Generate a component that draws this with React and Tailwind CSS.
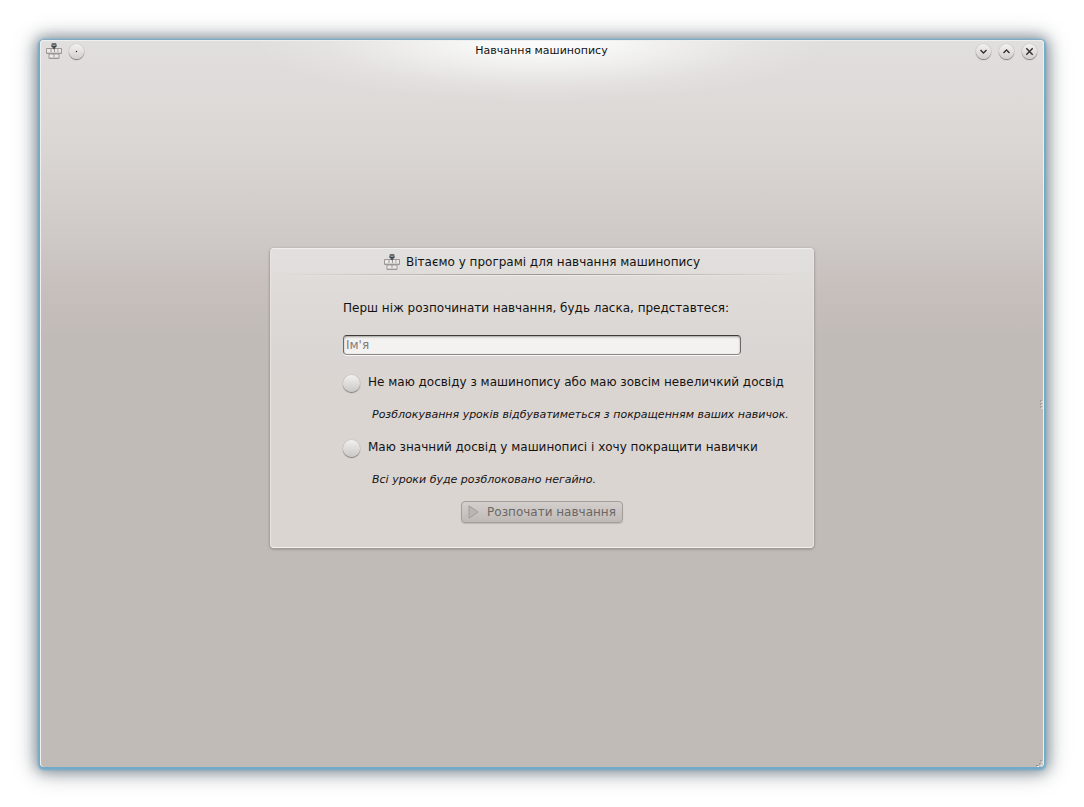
import { useState } from "react";

function TypistIcon() {
  return (
    <svg width="16" height="16" viewBox="0 0 16 16" aria-hidden="true" className="shrink-0">
      <g fill="#9b9795">
        <rect x="0" y="5" width="16" height="6" rx="1" />
        <rect x="2.5" y="10" width="11" height="6" rx="1" />
      </g>
      <g fill="#eceae8">
        <rect x="1" y="6" width="3.5" height="3.5" />
        <rect x="5.500" y="6" width="2.500" height="3.500" />
        <rect x="9" y="6" width="2.500" height="3.500" />
        <rect x="12.300" y="6" width="2.700" height="3.500" />
        <rect x="3.500" y="11.500" width="4" height="3" />
        <rect x="8.500" y="11.500" width="4" height="3" />
      </g>
      <g fill="#cfccc9">
        <rect x="1" y="9" width="14" height="1" />
        <rect x="3.500" y="14" width="9" height="1" />
      </g>
      <rect x="5.500" y="0" width="5" height="3" rx="1" fill="#6c6e6f" />
      <rect x="5.500" y="2" width="5" height="2" fill="#3f4547" />
      <rect x="6.500" y="2" width="3" height="1" fill="#8fa6b0" />
      <path d="M6.500 4h3v1l-1.500 1.500L6.500 5z" fill="#4c4f50" />
    </svg>
  );
}

function TitleButton({ label, children }) {
  return (
    <button
      type="button"
      aria-label={label}
      className="flex size-[15px] items-center justify-center rounded-full bg-linear-to-b from-[#f3f2f1] to-[#d3cfcc] shadow-[0_1px_1px_0_#7d7977,0_0_1px_0_#8f8b89]"
    >
      <svg width="15" height="15" viewBox="0 0 15 15" fill="none" stroke="#303030" strokeWidth="1.4">
        {children}
      </svg>
    </button>
  );
}

function Choice({ id, value, selected, onSelect, label, hint }) {
  return (
    <div>
      <div className="flex h-5 items-center gap-2">
        <input
          type="radio"
          name="experience"
          id={id}
          value={value}
          checked={selected === value}
          onChange={() => onSelect(value)}
          aria-describedby={id + "-hint"}
          className="mt-0.5 size-[17px] shrink-0 appearance-none rounded-full bg-linear-to-b from-[#f2f1f0] to-[#cbc7c4] shadow-[0_1px_1px_0_#7d7977,0_0_1px_0_#8f8b89] checked:bg-radial checked:from-[#333333] checked:from-30% checked:to-[#d9d6d3] checked:to-40%"
        />
        <label htmlFor={id} className="whitespace-nowrap">
          {label}
        </label>
      </div>
      <p id={id + "-hint"} className="mt-[15px] pl-[29px] text-[11px] leading-4 whitespace-nowrap italic">
        {hint}
      </p>
    </div>
  );
}

export default function App() {
  const [name, setName] = useState("");
  const [level, setLevel] = useState("");

  return (
    <div className="flex min-h-screen flex-col bg-white p-10 font-['DejaVu_Sans',sans-serif] text-[12px] text-[#141312]">
      <div className="relative flex grow flex-col rounded-[4px] border border-b-0 border-[#eef0f0] bg-[radial-gradient(ellipse_290px_62px_at_50%_0px,#fcfcfc_0%,#fcfcfce0_20%,#fafafa80_50%,#fafafa2a_75%,#fafafa00_100%),linear-gradient(180deg,#e1dfdd_0px,#dddad8_60px,#dad6d4_110px,#d5d0ce_150px,#cec8c6_200px,#c6bfbc_250px,#c1bbb7_300px)] shadow-[0_1px_2px_2px_#6fabc9,0_1px_14px_4px_#3a52648c,0_2px_26px_4px_#00000038]">
        <header className="grid h-5 grid-cols-[1fr_auto_1fr] items-center pr-1.5 pl-[5px]">
          <div className="flex items-center gap-[7px]">
            <TypistIcon />
            <TitleButton label="На всіх стільницях">
              <circle cx="7.5" cy="7.5" r="0.7" fill="#242424" stroke="none" />
            </TitleButton>
          </div>
          <h1 className="text-[11px] leading-5">Навчання машинопису</h1>
          <div className="flex items-center justify-end gap-2">
            <TitleButton label="Мінімізувати">
              <path d="M4.500 6l3 3 3-3" />
            </TitleButton>
            <TitleButton label="Максимізувати">
              <path d="M4.500 9l3-3 3 3" />
            </TitleButton>
            <TitleButton label="Закрити">
              <path d="M4.300 4.300l6.400 6.400M10.700 4.300l-6.400 6.400" />
            </TitleButton>
          </div>
        </header>

        <main className="flex grow items-center justify-center pb-8">
          <form
            onSubmit={(e) => e.preventDefault()}
            className="w-full max-w-[544px] rounded-[4px] border border-[#f3f1f0] border-x-[#e6e3e1] border-t-[#f0efee] bg-[linear-gradient(180deg,#e2e0de_0px,#dddad7_50px,#dad6d4_100px,#dbd5d2_130px)] pb-6 shadow-[0_1px_2px_1px_#8c868399]"
          >
            <div className="flex h-[25px] items-center justify-center gap-1.5">
              <TypistIcon />
              <h2>Вітаємо у програмі для навчання машинопису</h2>
            </div>
            <div className="mx-3 h-px bg-linear-to-r from-transparent via-[#9b9592] to-transparent" />
            <div className="mx-3 h-px bg-linear-to-r from-transparent via-[#f1efee] to-transparent" />

            <div className="px-18 pt-[22px]">
              <label htmlFor="name" className="block leading-5 whitespace-nowrap">
                Перш ніж розпочинати навчання, будь ласка, представтеся:
              </label>
              <input
                id="name"
                type="text"
                placeholder="Ім'я"
                value={name}
                onChange={(e) => setName(e.target.value)}
                className="mt-[17px] block h-5 w-full rounded-[4px] border border-[#8c8886] border-t-[#3e3c3b] border-r-[#6b6765] border-l-[#6b6765] bg-[#f3f2f1] px-0.5 shadow-[0_1px_0_0_#f8f7f6,inset_0_1px_2px_0_#a5a2a0] outline-none placeholder:text-[#7f7c7a]"
              />
              <div className="mt-[17px] flex flex-col gap-3.5">
                <Choice
                  id="novice"
                  value="novice"
                  selected={level}
                  onSelect={setLevel}
                  label="Не маю досвіду з машинопису або маю зовсім невеличкий досвід"
                  hint="Розблокування уроків відбуватиметься з покращенням ваших навичок."
                />
                <Choice
                  id="expert"
                  value="expert"
                  selected={level}
                  onSelect={setLevel}
                  label="Маю значний досвід у машинописі і хочу покращити навички"
                  hint="Всі уроки буде розблоковано негайно."
                />
              </div>
            </div>

            <div className="mt-[13px] flex justify-center">
              <button
                type="submit"
                disabled={!name || !level}
                className="flex h-[22px] items-center gap-2 rounded-[4px] border border-[#a39e9b] bg-linear-to-b from-[#d3cfcc] to-[#c0bab7] px-1.5 text-[#6b6765] shadow-[0_1px_1px_0_#bdb8b5]"
              >
                <svg width="11" height="14" viewBox="0 0 11 14" aria-hidden="true">
                  <path d="M1 0.800L10 7L1 13.200z" fill="#bbb6b3" stroke="#a09b98" strokeLinejoin="round" />
                </svg>
                Розпочати навчання
              </button>
            </div>
          </form>
        </main>

        <svg width="3" height="9" viewBox="0 0 3 9" aria-hidden="true" className="absolute inset-y-0 right-0 my-auto">
          <path d="M0 1h2M0 4h2M0 7h2" stroke="#8d8784" />
          <path d="M1 2h2M1 5h2M1 8h2" stroke="#f0efee" />
        </svg>
        <svg width="8" height="8" viewBox="0 0 8 8" aria-hidden="true" className="absolute right-0 bottom-0">
          <path d="M1 6.500h2M4 5h2M5 2h2" stroke="#8d8784" />
          <path d="M2 7.500h2M5 6h2M6 3h2" stroke="#f0efee" />
        </svg>
      </div>
    </div>
  );
}
